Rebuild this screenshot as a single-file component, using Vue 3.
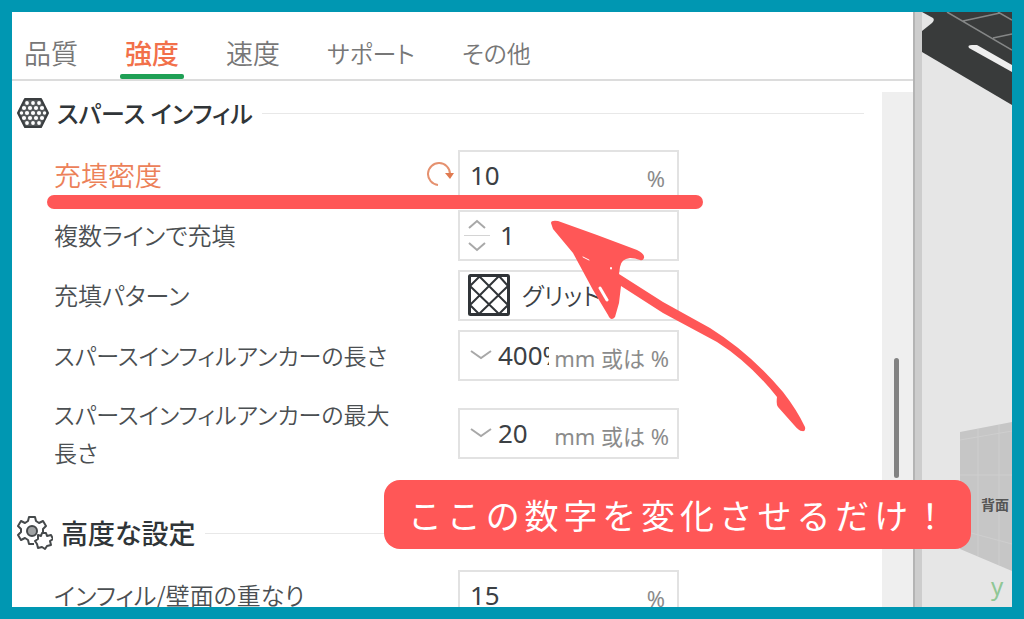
<script setup>
import { ref } from 'vue'

const tabs = [
  { name: '品質' },
  { name: '強度' },
  { name: '速度' },
  { name: 'サポート', kana: true },
  { name: 'その他', kana: true },
]
const active = ref('強度')
const density = ref('10')
const lines = ref('1')
const pattern = ref('grid')
const anchor = ref('400%')
const anchorMax = ref('20')
const overlap = ref('15')
</script>

<template>
  <main class="frame">
    <section class="panel">
      <nav class="tabs">
        <button
          v-for="tab in tabs"
          :key="tab.name"
          type="button"
          class="tab"
          :class="{ active: tab.name === active, kana: tab.kana }"
          @click="active = tab.name"
        >{{ tab.name }}</button>
      </nav>

      <div class="body">
        <div class="settings">
          <h2 class="heading kana">
            <svg class="heading-icon" viewBox="0 0 32 32" aria-hidden="true">
              <path d="M8 2H24L31 16L24 30H8L1 16Z" fill="#54585a" stroke="#3a3e40" stroke-width="2" stroke-linejoin="round" />
              <g fill="#fff">
                <circle cx="10" cy="6" r="1.9" /><circle cx="16" cy="6" r="1.9" /><circle cx="22" cy="6" r="1.9" />
                <circle cx="7" cy="11" r="2.1" /><circle cx="13" cy="11" r="2.1" /><circle cx="19" cy="11" r="2.1" /><circle cx="25" cy="11" r="2.1" />
                <circle cx="4.5" cy="16" r="1.7" /><circle cx="10" cy="16" r="2.1" /><circle cx="16" cy="16" r="2.1" /><circle cx="22" cy="16" r="2.1" /><circle cx="27.5" cy="16" r="1.7" />
                <circle cx="7" cy="21" r="2.1" /><circle cx="13" cy="21" r="2.1" /><circle cx="19" cy="21" r="2.1" /><circle cx="25" cy="21" r="2.1" />
                <circle cx="10" cy="26" r="1.9" /><circle cx="16" cy="26" r="1.9" /><circle cx="22" cy="26" r="1.9" />
              </g>
            </svg>
            <span>スパース インフィル</span>
          </h2>

          <div class="row changed">
            <label for="density">充填密度</label>
            <button type="button" class="reset" aria-label="リセット">
              <svg viewBox="0 0 28 28" aria-hidden="true">
                <path d="M11 24A11 11 0 1 1 23 13" fill="none" stroke="#e5916f" stroke-width="2" />
                <path d="M18 12H27L23 18Z" fill="#e07a50" />
              </svg>
            </button>
            <div class="field">
              <input id="density" v-model="density" class="plain" type="text">
              <span class="unit">%</span>
            </div>
          </div>

          <div class="row">
            <label for="lines">複数ラインで充填</label>
            <div class="field">
              <div class="stepper">
                <button type="button" aria-label="増やす">
                  <svg viewBox="0 0 18 10" aria-hidden="true"><path d="M1 9L9 2L17 9" /></svg>
                </button>
                <button type="button" aria-label="減らす">
                  <svg viewBox="0 0 18 10" aria-hidden="true"><path d="M1 1L9 8L17 1" /></svg>
                </button>
              </div>
              <input id="lines" v-model="lines" type="text">
            </div>
          </div>

          <div class="row">
            <label for="pattern">充填パターン</label>
            <div class="field">
              <svg class="grid-icon" viewBox="0 0 42 42" aria-hidden="true">
                <rect x="1.5" y="1.5" width="39" height="39" rx="1" />
                <path d="M2 12L12 2M2 31L31 2M11 40L40 12M31 40L40 31M31 2L40 12M11 2L40 31M2 12L31 40M2 31L11 40" />
              </svg>
              <select id="pattern" v-model="pattern">
                <option value="grid">グリッド</option>
                <option value="line">ライン</option>
              </select>
            </div>
          </div>

          <div class="row">
            <label for="anchor" class="long">スパースインフィルアンカーの長さ</label>
            <div class="field">
              <button type="button" class="drop" aria-label="候補を開く">
                <svg viewBox="0 0 22 10" aria-hidden="true"><path d="M1 1L11 8L21 1" /></svg>
              </button>
              <input id="anchor" v-model="anchor" class="short" type="text">
              <span class="unit">mm 或は %</span>
            </div>
          </div>

          <div class="row">
            <label for="anchor-max" class="long">スパースインフィルアンカーの最大長さ</label>
            <div class="field">
              <button type="button" class="drop" aria-label="候補を開く">
                <svg viewBox="0 0 22 10" aria-hidden="true"><path d="M1 1L11 8L21 1" /></svg>
              </button>
              <input id="anchor-max" v-model="anchorMax" class="short" type="text">
              <span class="unit">mm 或は %</span>
            </div>
          </div>

          <h2 class="heading later">
            <svg class="heading-icon gears" viewBox="0 0 36 36" aria-hidden="true">
              <g fill="none" stroke="#45494b" stroke-width="2" stroke-linejoin="round">
                <path d="M17 29L12 29L11 25L8 23L4 25L1 20L4 17V14L1 11L4 6L8 8L11 6L12 2H18L19 6L22 8L26 6L29 11L26 14V17" />
                <circle cx="15" cy="16" r="5" fill="#a0a3a4" />
                <path d="M25 18H29L30 21L34 20L36 24L33 26L34 30L30 31L28 34L25 32L21 33L20 29L18 26L21 24L21 20L24 21Z" />
              </g>
            </svg>
            <span>高度な設定</span>
          </h2>

          <div class="row">
            <label for="overlap">インフィル/壁面の重なり</label>
            <div class="field">
              <input id="overlap" v-model="overlap" class="plain" type="text">
              <span class="unit">%</span>
            </div>
          </div>
        </div>
        <div class="track"><div class="thumb"></div></div>
      </div>
    </section>

    <div class="splitter"></div>

    <svg class="scene" viewBox="922 12 90 595" preserveAspectRatio="xMidYMid slice" aria-hidden="true">
      <path d="M922 12H1012V105L922 52Z" fill="#393b3b" />
      <path d="M922 12L933 18Q935 20 932 23L922 31Z" fill="#e6e6e6" />
      <path d="M947 12L1012 50M963 21L1000 13M993 38L1012 34M998 12L1012 20" fill="none" stroke="#858787" stroke-width="1.5" />
      <path d="M969 48Q967 45 972 45L977 45L1012 65V72Z" fill="#eee" />
      <path d="M960 432L1012 422V571L960 549Z" fill="#c6c6c6" />
      <path d="M978 429V556M999 425V565M960 440L1012 431M960 475H1012M960 530L1012 544" fill="none" stroke="#cecece" />
      <text x="981" y="510" class="cube-label">背面</text>
      <text x="991" y="595" class="axis-label">y</text>
    </svg>

    <div class="underline"></div>
    <svg class="arrow" viewBox="540 210 280 230" aria-hidden="true">
      <path d="M551 223Q551 220 558 221L597 235L637 250Q645 254 644 258Q643 261 640 260Q635 258 630 258Q621 259 620 267L619 274L663 302L710 328Q750 353 783 392Q797 410 805 427Q806 432 802 431Q799 431 794 425L778 407Q776 405 777 397Q750 363 717 342L663 313L621 286L619 303L615 317Q611 322 608 315L593 290L573 253L553 229Z" fill="#ff5757" />
      <g stroke="#fff" stroke-linecap="round">
        <path d="M583 257L589 260" stroke-width="1" />
        <path d="M611 268V268.5" stroke-width="2" />
        <path d="M600 288L607 300" stroke-width="3" />
      </g>
    </svg>
    <p class="callout">ここの数字を変化させるだけ！</p>
  </main>
</template>

<style>
body {
  overflow: hidden;
}
</style>

<style scoped>
.frame {
  position: relative;
  box-sizing: border-box;
  display: flex;
  height: 100vh;
  overflow: hidden;
  border: 12px solid #0097b2;
  background: #fff;
  color: #4b4f52;
  font: 24px/38px "Noto Sans CJK JP", sans-serif;
  font-weight: 350;
  font-feature-settings: "palt";
}
button,
input,
select {
  margin: 0;
  padding: 0;
  border: 0;
  outline: 0;
  background: none;
  color: inherit;
  font: inherit;
  font-feature-settings: inherit;
}
.panel {
  flex: 1;
  min-width: 0;
  display: flex;
  flex-direction: column;
}
.tabs {
  flex: none;
  display: flex;
  gap: 37px;
  height: 67px;
  padding-left: 7px;
  border-bottom: 2px solid #dcdcdc;
}
.tab {
  position: relative;
  padding: 22px 5px 7px;
  color: #777;
  font-size: 27px;
  white-space: nowrap;
}
.tab.kana {
  font-size: 24px;
}
.tab.active {
  color: #f2704a;
  font-weight: 500;
}
.tab.active::after {
  content: "";
  position: absolute;
  left: 0;
  right: 0;
  bottom: 0;
  height: 5px;
  border-radius: 2px;
  background: #1fa055;
}
.body {
  flex: 1;
  min-height: 0;
  display: flex;
}
.settings {
  flex: 1;
  min-width: 0;
  height: 100%;
  overflow: hidden;
}
.heading {
  display: flex;
  align-items: center;
  height: 64px;
  margin: 0 18px 0 5px;
  color: #303538;
  font-size: 27px;
  font-weight: 500;
}
.heading.kana {
  font-size: 24px;
}
.heading.later {
  margin-top: 20px;
}
.heading::after {
  content: "";
  flex: 1;
  height: 1px;
  margin-left: 9px;
  background: #e8e8e8;
}
.heading-icon {
  flex: none;
  width: 32px;
  height: 32px;
  margin-right: 8px;
}
.heading-icon.gears {
  width: 36px;
  height: 36px;
}
.row {
  display: flex;
  align-items: center;
  min-height: 60px;
  padding-left: 42px;
}
.row label {
  flex: none;
  box-sizing: border-box;
  width: 404px;
  padding: 10px 54px 10px 0;
}
.row label.long {
  font-size: 23px;
}
.changed label {
  width: 373px;
  color: #ec8159;
  font-size: 27px;
}
.reset {
  width: 28px;
  height: 28px;
  margin-right: 3px;
}
.reset svg {
  display: block;
}
.field {
  box-sizing: border-box;
  display: flex;
  align-items: center;
  width: 221px;
  height: 51px;
  padding-right: 8px;
  border: 2px solid #e2e2e2;
  background: #fff;
  color: #3b4044;
}
.field input {
  flex: 1;
  min-width: 0;
  font: 26px/38px "Noto Sans", "Noto Sans CJK JP", sans-serif;
}
.field input.plain {
  padding-left: 10px;
}
.field input.short {
  flex: none;
  width: 51px;
}
.unit {
  margin: 6px 0 0 auto;
  padding-right: 4px;
  color: #8b8b8b;
  font: 22px/32px "Noto Sans", "Noto Sans CJK JP", sans-serif;
  white-space: nowrap;
}
.short + .unit {
  padding-right: 0;
}
.stepper {
  display: flex;
  flex-direction: column;
  width: 26px;
  margin: 0 10px 0 4px;
}
.stepper button {
  display: flex;
  align-items: center;
  justify-content: center;
  height: 22px;
}
.stepper button + button {
  border-top: 1px solid #d4d4d4;
}
.stepper svg {
  width: 18px;
  height: 10px;
}
.stepper path,
.drop path {
  fill: none;
  stroke: #a8a8a8;
  stroke-width: 2;
}
.drop {
  display: flex;
  align-items: center;
  width: 28px;
  height: 38px;
  margin-left: 10px;
}
.drop svg {
  width: 22px;
  height: 10px;
}
.grid-icon {
  flex: none;
  width: 42px;
  height: 42px;
  margin: 0 12px 0 8px;
  fill: none;
  stroke: #303438;
  stroke-width: 3;
}
.grid-icon path {
  stroke-width: 2;
}
.field select {
  flex: 1;
  min-width: 0;
  appearance: none;
  font-size: 24px;
}
.track {
  flex: none;
  width: 31px;
  margin-top: 11px;
  background: #efefef;
}
.thumb {
  width: 5px;
  height: 120px;
  margin: 266px auto 0 12px;
  border-radius: 3px;
  background: #828282;
}
.splitter {
  flex: none;
  box-sizing: border-box;
  width: 9px;
  border-left: 2px solid #b4b4b4;
  background: #cdcdcd;
}
.scene {
  flex: none;
  width: 90px;
  height: 100%;
  background: #e6e6e6;
}
.cube-label {
  fill: #555;
  font-size: 14px;
  font-weight: 700;
}
.axis-label {
  fill: #8fc795;
  font: 24px "Noto Sans", sans-serif;
}
.underline {
  position: absolute;
  top: 183px;
  left: 35px;
  width: 656px;
  height: 14px;
  border-radius: 7px;
  background: #ff5757;
}
.arrow {
  position: absolute;
  top: 198px;
  left: 528px;
  width: 280px;
  height: 230px;
}
.callout {
  position: absolute;
  top: 468px;
  left: 372px;
  box-sizing: border-box;
  width: 587px;
  margin: 0;
  padding: 10px 24px;
  border-radius: 16px;
  background: #ff5757;
  color: #fff;
  font-size: 34px;
  font-weight: 400;
  line-height: 49px;
  font-feature-settings: normal;
  text-align: justify;
  text-align-last: justify;
}
</style>
